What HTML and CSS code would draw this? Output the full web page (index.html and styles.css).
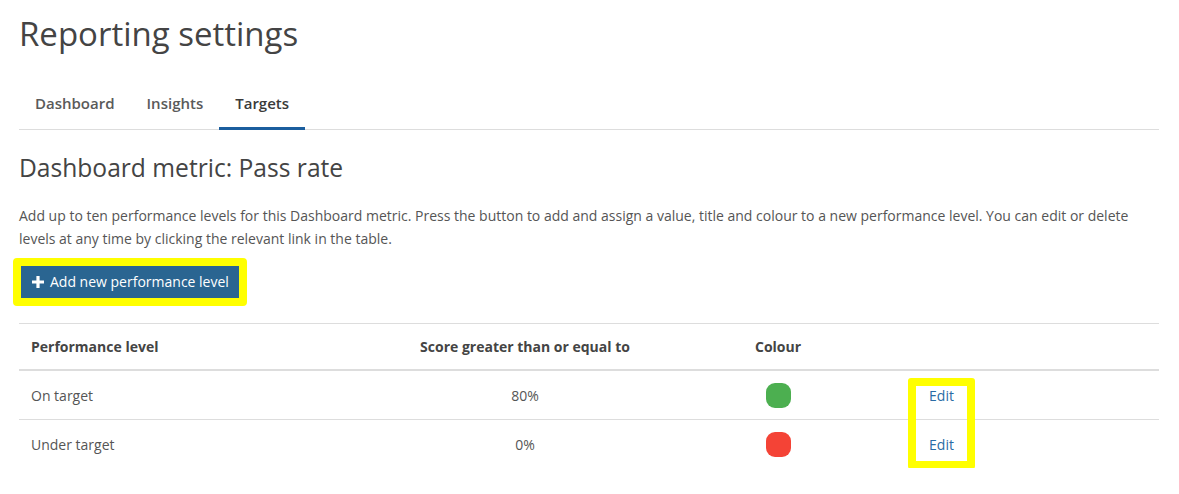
FILE: index.html
```html
<!DOCTYPE html>
<html lang="en">
<head>
<meta charset="utf-8">
<title>Reporting settings</title>
<link rel="stylesheet" href="styles.css">
</head>
<body>
<main class="page">
  <h1 class="page-title">Reporting settings</h1>
  <nav class="tabs">
    <a class="tab">Dashboard</a>
    <a class="tab">Insights</a>
    <a class="tab tab-active">Targets</a>
  </nav>
  <h2 class="section-title">Dashboard metric: Pass rate</h2>
  <p class="intro">Add up to ten performance levels for this Dashboard metric. Press the button to add and assign a value, title and colour to a new performance level. You can edit or delete levels at any time by clicking the relevant link in the table.</p>
  <div class="highlight-btn">
    <button class="btn-primary" type="button">
      <svg class="plus" viewBox="0 0 12 12" width="12" height="12" aria-hidden="true"><path d="M4.4 0h3.2v4.4H12v3.2H7.6V12H4.4V7.6H0V4.4h4.4z" fill="#fff"/></svg>
      <span>Add new performance level</span>
    </button>
  </div>
  <div class="table-wrap">
    <div class="table">
      <div class="row head">
        <div class="cell c-name">Performance level</div>
        <div class="cell c-score">Score greater than or equal to</div>
        <div class="cell c-colour">Colour</div>
        <div class="cell c-edit"></div>
        <div class="cell"></div>
      </div>
      <div class="row body-row">
        <div class="cell c-name">On target</div>
        <div class="cell c-score">80%</div>
        <div class="cell c-colour"><span class="swatch green"></span></div>
        <div class="cell c-edit"><a class="link">Edit</a></div>
        <div class="cell"></div>
      </div>
      <div class="row body-row last">
        <div class="cell c-name">Under target</div>
        <div class="cell c-score">0%</div>
        <div class="cell c-colour"><span class="swatch red"></span></div>
        <div class="cell c-edit"><a class="link">Edit</a></div>
        <div class="cell"></div>
      </div>
    </div>
    <div class="edit-highlight"></div>
  </div>
</main>
</body>
</html>
```

FILE: styles.css
```css
* { box-sizing: border-box; }
html, body { margin: 0; padding: 0; background: #fff; }
body {
  font-family: "Open Sans", "Liberation Sans", Arial, sans-serif;
  color: #555;
  font-size: 14px;
}
.page {
  width: 1140px;
  margin-left: 19px;
}
.page-title {
  margin: 11px 0 0;
  font-size: 33px;
  line-height: 46px;
  font-weight: 400;
  color: #444;
}
.tabs {
  display: flex;
  margin-top: 26px;
  border-bottom: 1px solid #ddd;
}
.tab {
  display: block;
  padding: 10px 16px 14px;
  font-size: 15px;
  line-height: 20px;
  font-weight: 600;
  color: #5a5a5a;
  border-bottom: 3px solid transparent;
  margin-bottom: -1px;
}
.tab-active {
  color: #3a3a3a;
  border-bottom-color: #1b5e9e;
}
.section-title {
  margin: 22px 0 0;
  font-size: 24.6px;
  line-height: 32px;
  font-weight: 400;
  color: #444;
}
.intro {
  margin: 20px 0 0;
  font-size: 14px;
  line-height: 23px;
  color: #555;
}
.highlight-btn {
  display: inline-block;
  margin: 8px 0 0 -6px;
  border: 8px solid #ffff00;
  border-radius: 4px;
}
.btn-primary {
  display: flex;
  align-items: center;
  gap: 6px;
  height: 32px;
  padding: 0 10px 0 11px;
  border: 0;
  background: #2a6591;
  color: #fff;
  font-family: inherit;
  font-size: 14px;
  line-height: 20px;
}
.plus { display: block; }
.table-wrap {
  position: relative;
  margin-top: 17px;
}
.table {
  border-top: 1px solid #ddd;
}
.row {
  display: grid;
  grid-template-columns: 381px 250px 258px 67px 1fr;
  height: 49px;
  border-bottom: 1px solid #ddd;
  align-items: center;
}
.body-row { padding-top: 2px; }
.row.head {
  height: 47px;
  border-bottom: 2px solid #ddd;
  font-weight: 700;
  color: #444;
}
.row.last { height: 48px; border-bottom: 0; }
.cell {
  padding: 0 12px;
  line-height: 20px;
}
.c-score { text-align: center; padding: 0; }
.c-colour { padding: 0 0 0 105px; }
.c-colour .swatch { margin-left: 11px; margin-top: -2px; }
.c-edit { text-align: center; padding: 0; }
.swatch {
  display: block;
  width: 25px;
  height: 25px;
  border-radius: 9px;
}
.green { background: #4caf50; }
.red { background: #f44336; }
.link { color: #2a6ba5; }
.edit-highlight {
  position: absolute;
  left: 889px;
  top: 55px;
  width: 67px;
  height: 91px;
  border: 8px solid #ffff00;
  border-radius: 3px;
}
```
